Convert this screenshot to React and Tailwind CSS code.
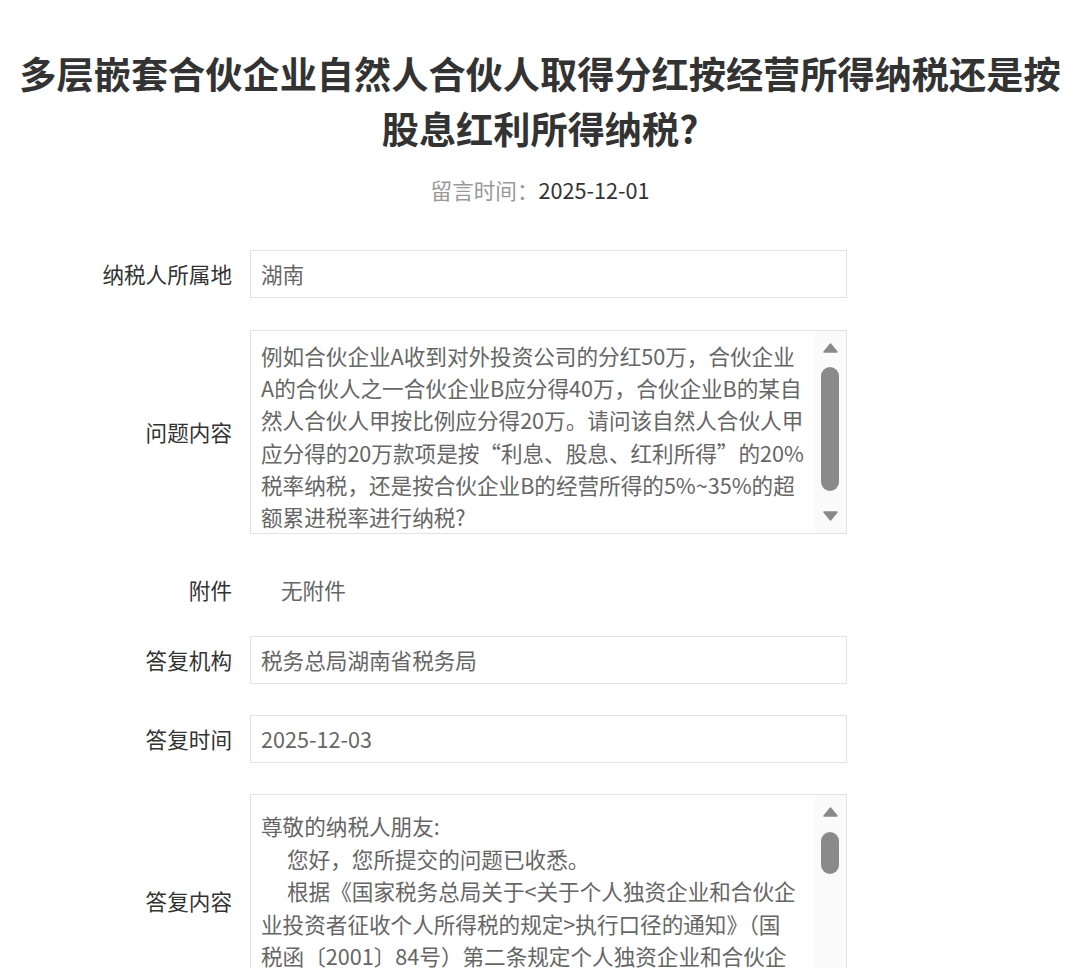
import React from 'react';

const font = { fontFamily: '"Noto Sans CJK SC", "Noto Sans", sans-serif' };

const questionLines = [
  '例如合伙企业A收到对外投资公司的分红50万，合伙企业',
  'A的合伙人之一合伙企业B应分得40万，合伙企业B的某自',
  '然人合伙人甲按比例应分得20万。请问该自然人合伙人甲',
  '应分得的20万款项是按“利息、股息、红利所得”的20%',
  '税率纳税，还是按合伙企业B的经营所得的5%~35%的超',
  '额累进税率进行纳税?',
];

const answerLines = [
  { text: '尊敬的纳税人朋友:', indent: false },
  { text: '您好，您所提交的问题已收悉。', indent: true },
  { text: '根据《国家税务总局关于<关于个人独资企业和合伙企', indent: true },
  { text: '业投资者征收个人所得税的规定>执行口径的通知》（国', indent: false },
  { text: '税函〔2001〕84号）第二条规定个人独资企业和合伙企', indent: false },
  { text: '业对外投资分回的利息或者股息、红利，不并入企业的收', indent: false },
];

// fake scrollbar drawn inside the scroll boxes
const Scrollbar = ({ thumbTop, thumbHeight }) => (
  <div className="absolute right-0 top-0 bottom-0 w-[31px] bg-[#fafafa]">
    <svg className="absolute left-[8px] top-[12px]" width="15" height="10" viewBox="0 0 15 10">
      <path d="M7.5 1 L14 9 L1 9 Z" fill="#8a8a8a" strokeLinejoin="round" stroke="#8a8a8a" strokeWidth="1.5" />
    </svg>
    <div
      className="absolute left-[6px] w-[18px] rounded-full bg-[#8a8a8a]"
      style={{ top: thumbTop, height: thumbHeight }}
    />
    <svg className="absolute left-[8px] bottom-[12px]" width="15" height="10" viewBox="0 0 15 10">
      <path d="M1 1 L14 1 L7.5 9 Z" fill="#8a8a8a" strokeLinejoin="round" stroke="#8a8a8a" strokeWidth="1.5" />
    </svg>
  </div>
);

const Row = ({ label, children, className = '' }) => (
  <div className={`grid grid-cols-[232px_597px] gap-x-[18px] items-center ${className}`}>
    <div className="text-right text-[#333]">{label}</div>
    {children}
  </div>
);

const Field = ({ value }) => (
  <div className="h-[48px] border border-[#e3e3e3] px-[10px] flex items-center text-[#666]">{value}</div>
);

export default function App() {
  return (
    <div className="h-screen overflow-hidden bg-white text-[21.6px] leading-[1.5]" style={font}>
      <h1 className="pt-[46px] px-[16px] text-center text-[37.2px] leading-[55px] font-bold text-[#333]">
        多层嵌套合伙企业自然人合伙人取得分红按经营所得纳税还是按股息红利所得纳税?
      </h1>
      <div className="mt-[18px] text-center leading-[32px]">
        <span className="text-[#999]">留言时间：</span>
        <span className="text-[#333]">2025-12-01</span>
      </div>

      <div className="mt-[44px]">
        <Row label="纳税人所属地">
          <Field value="湖南" />
        </Row>

        <Row label="问题内容" className="mt-[32px]">
          <div className="relative h-[204px] border border-[#e3e3e3] overflow-hidden text-[#666]">
            <div className="pl-[10px] pt-[9px] leading-[32.2px] whitespace-nowrap">
              {questionLines.map((l, i) => (
                <div key={i}>{l}</div>
              ))}
            </div>
            <Scrollbar thumbTop={36} thumbHeight={124} />
          </div>
        </Row>

        <Row label="附件" className="mt-[32px] h-[48px]">
          <div className="pl-[31px] text-[#666]">无附件</div>
        </Row>

        <Row label="答复机构" className="mt-[22px]">
          <Field value="税务总局湖南省税务局" />
        </Row>

        <Row label="答复时间" className="mt-[31px]">
          <Field value="2025-12-03" />
        </Row>

        <Row label="答复内容" className="mt-[31px]">
          <div className="relative h-[214px] border border-[#e3e3e3] overflow-hidden text-[#666]">
            <div className="pl-[10px] pt-[15px] leading-[32.5px] whitespace-nowrap">
              {answerLines.map((l, i) => (
                <div key={i} className={l.indent ? 'pl-[26px]' : ''}>{l.text}</div>
              ))}
            </div>
            <Scrollbar thumbTop={37} thumbHeight={42} />
          </div>
        </Row>
      </div>
    </div>
  );
}
